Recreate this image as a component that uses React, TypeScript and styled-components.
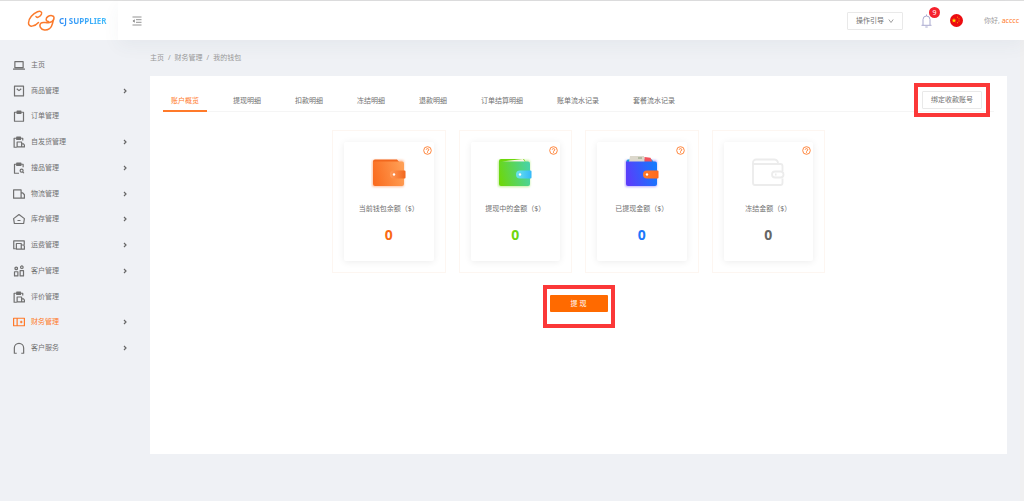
import React from "react";
import styled, { createGlobalStyle, css } from "styled-components";

const GlobalStyle = createGlobalStyle`
  * { box-sizing: border-box; }
  html { background: #eff1f5; }
  body {
    margin: 0;
    font-family: "Noto Sans", "Noto Sans CJK SC", sans-serif;
    font-size: 7px;
    line-height: 12px;
    color: #707070;
  }
  button { font: inherit; color: inherit; cursor: pointer; }
  ul, ol { list-style: none; margin: 0; padding: 0; }
  a { color: inherit; text-decoration: none; }
`;

const Page = styled.div`
  min-height: 100vh;
  display: flex;
  flex-direction: column;
  background: #eff1f5;
  border-right: 4px solid #f0f0f1;
`;

const Header = styled.header`
  position: relative;
  display: flex;
  align-items: stretch;
  height: 40px;
  margin-right: -4px;
  border-top: 1px solid #dedede;
  background: #fff;
`;

const Brand = styled.a`
  display: flex;
  align-items: center;
  gap: 4px;
  width: 118px;
  padding-left: 27px;
`;

const BrandName = styled.span`
  font: 700 8px/12px "Noto Sans", sans-serif;
  white-space: nowrap;
  background: linear-gradient(90deg, #2f8df5, #45bdfb);
  background-clip: text;
  color: transparent;
`;

const TopBar = styled.div`
  flex: 1;
  display: flex;
  align-items: center;
  padding: 0 5px 0 14px;
  box-shadow: 0 6px 18px rgba(60, 70, 100, 0.05);
`;

const IconButton = styled.button`
  position: relative;
  display: flex;
  padding: 0;
  border: 0;
  background: none;
`;

const Tools = styled.div`
  display: flex;
  align-items: center;
  margin-left: auto;
`;

const OutlineButton = styled.button`
  display: flex;
  align-items: center;
  justify-content: center;
  gap: 4px;
  height: 18px;
  padding: 0 8px;
  border: 1px solid #e9e9e9;
  border-radius: 1px;
  background: #fff;
  white-space: nowrap;
`;

const Bell = styled(IconButton)`
  margin: 0 18px;
`;

const Badge = styled.span`
  position: absolute;
  top: -7px;
  right: -8px;
  width: 11px;
  height: 11px;
  border-radius: 50%;
  background: #f5222d;
  color: #fff;
  line-height: 11px;
  text-align: center;
`;

const Greeting = styled.p`
  margin: 0 0 0 21px;
  color: #999;
`;

const UserName = styled.a`
  color: #ff7a2a;
`;

const Body = styled.div`
  flex: 1;
  display: flex;
`;

const Sidebar = styled.nav`
  width: 150px;
  padding: 12px 23px 0 13px;
`;

const Menu = styled.ul`
  display: grid;
  grid-auto-rows: 1fr;
  min-height: 309px;
`;

const MenuLink = styled.a<{ $active?: boolean }>`
  display: flex;
  align-items: center;
  gap: 6px;
  height: 100%;
  color: ${(p) => (p.$active ? "#ff7a2a" : "#707070")};
`;

const MenuArrow = styled.svg`
  margin-left: auto;
  color: #666;
`;

const Main = styled.main`
  flex: 1;
  min-width: 0;
  padding: 12px 13px 47px 0;
  display: flex;
  flex-direction: column;
`;

const Breadcrumb = styled.ol`
  display: flex;
  gap: 4px;
  margin-bottom: 12px;
  color: #999;
`;

const Panel = styled.section`
  flex: 1;
  padding: 12px 13px;
  background: #fff;
`;

const PanelHead = styled.div`
  display: flex;
  align-items: flex-end;
  height: 24px;
  border-bottom: 1px solid #f5f5f5;
`;

const Tabs = styled.div`
  display: flex;
  gap: 18px;
`;

const Tab = styled.button<{ $active?: boolean }>`
  height: 22px;
  margin-bottom: -1px;
  padding: 2px 8px 0;
  border: 0;
  border-bottom: 2px solid transparent;
  background: none;
  white-space: nowrap;
  ${(p) =>
    p.$active &&
    css`
      color: #ff7a2a;
      border-color: #ff7a2a;
    `}
`;

const Highlight = styled.div`
  border: 4px solid #fb3838;
`;

const AccountSlot = styled(Highlight)`
  align-self: center;
  margin: 0 4px 0 auto;
  padding: 4px;
`;

const Wallets = styled.ul`
  display: grid;
  grid-template-columns: repeat(4, 1fr);
  gap: 13px;
  max-width: 493px;
  margin: 18px auto 12px;
`;

const WalletFrame = styled.li`
  padding: 11px;
  border: 1px solid #fdf6f1;
`;

const WalletCard = styled.article`
  position: relative;
  display: flex;
  flex-direction: column;
  align-items: center;
  height: 119px;
  padding-top: 13px;
  border-radius: 2px;
  box-shadow: 0 1px 7px rgba(0, 0, 0, 0.08);
`;

const Help = styled(IconButton)`
  position: absolute;
  top: 4px;
  right: 2px;
`;

const WalletLabel = styled.h2`
  margin: 14px 0 11px;
  font-size: 7px;
  font-weight: 400;
  line-height: 12px;
`;

const Amount = styled.strong<{ $color: string }>`
  font-size: 14px;
  line-height: 18px;
  color: ${(p) => p.$color};
`;

const WithdrawSlot = styled(Highlight)`
  width: 72px;
  margin: 0 auto;
  padding: 6px 3px 12px;
`;

const Withdraw = styled.button`
  display: block;
  width: 100%;
  height: 17px;
  padding: 1px 0 0;
  border: 0;
  border-radius: 1px;
  background: #ff6a00;
  color: #fff;
`;

const icons: Record<string, React.ReactNode> = {
  laptop: <path d="M2.500 3.500h11v8h-11zM0 13.500h16" />,
  goods: <path d="M2 1.500h12v13H2zM5 5l3 2.500L11 5" />,
  order: <path d="M2 3h12v12H2zM5.500 1.500h5v3h-5z" />,
  ship: <path d="M13 6V3H1.500v12H5M5 1.500h5v3H5zM5.500 8H11.500v6.500H5.500zM11.500 10.500H14l1.200 1.500v2.500h-3.700" />,
  search: <path d="M13.500 7V3H2v12h6M5 1.500h5.500v3H5zM13.500 11.500a2 2 0 1 0-4 0 2 2 0 0 0 4 0M13 13l1.500 2" />,
  truck: <path d="M.8 2.500h10v11H.8zM10.800 6.500H13l2.200 2.500v4.500h-4.400" />,
  stock: <path d="M8 2l7.200 5.500-1 6.500H1.800L.8 7.500zM6 10h4" />,
  freight: <path d="M3.500 13H1V2.500h14v5M4.500 6H11v7.500H4.500zM11 8h3.500l.7 2v3.500H11" />,
  people: (
    <path d="M6 4.500a1.700 1.700 0 1 0-3.400 0 1.700 1.700 0 0 0 3.400 0M13.500 3a1.700 1.700 0 1 0-3.400 0 1.700 1.700 0 0 0 3.400 0M2 9h4.500v5.500H2zM9.500 7.500H14v7H9.500z" />
  ),
  finance: <path d="M.8 3h14.400v10H.8zM5.500 3v10M11 6.300v3.400M9.300 8h3.400" />,
  service: <path d="M5 15H1.800V8a6.200 6.200 0 0 1 12.400 0v7H11" />,
};

const menu = [
  { icon: "laptop", label: "主页" },
  { icon: "goods", label: "商品管理", more: true },
  { icon: "order", label: "订单管理" },
  { icon: "ship", label: "自发货管理", more: true },
  { icon: "search", label: "搜品管理", more: true },
  { icon: "truck", label: "物流管理", more: true },
  { icon: "stock", label: "库存管理", more: true },
  { icon: "freight", label: "运费管理", more: true },
  { icon: "people", label: "客户管理", more: true },
  { icon: "ship", label: "评价管理" },
  { icon: "finance", label: "财务管理", more: true, active: true },
  { icon: "service", label: "客户服务", more: true },
];

const tabs = [
  "账户概览",
  "提现明细",
  "扣款明细",
  "冻结明细",
  "退款明细",
  "订单结算明细",
  "账单流水记录",
  "套餐流水记录",
];

type WalletKind = "orange" | "green" | "blue" | "frozen";

const wallets: { kind: WalletKind; label: string; color: string }[] = [
  { kind: "orange", label: "当前钱包余额（$）", color: "#fa6a14" },
  { kind: "green", label: "提现中的金额（$）", color: "#6fd60c" },
  { kind: "blue", label: "已提现金额（$）", color: "#1b78fb" },
  { kind: "frozen", label: "冻结金额（$）", color: "#666" },
];

const fills = {
  orange: { body: ["#fa6d20", "#ff9f55"], clasp: ["#ff9a58", "#f2671d"] },
  green: { body: ["#6dd70c", "#48d3a5"], clasp: ["#6be3ea", "#35b8fb"] },
  blue: { body: ["#5b3cfb", "#147afd"], clasp: ["#ff7a2a", "#ff6a1c"] },
};

function WalletArt({ kind }: { kind: WalletKind }) {
  if (kind === "frozen") {
    return (
      <svg width="36" height="34" viewBox="0 0 36 34" fill="none" stroke="#ececec" strokeWidth="1.800" aria-hidden="true">
        <path d="M32.500 16v-5a2 2 0 0 0-2-2H3V28a2 2 0 0 0 2 2h25.500a2 2 0 0 0 2-2v-4.500" />
        <path d="M3 9.500V7.500a3 3 0 0 1 3-3h18.500a4 4 0 0 1 3.500 4" />
        <rect x="22" y="16.500" width="11.500" height="6" rx="3" />
        <path d="M25 19.500h1.500" />
      </svg>
    );
  }
  const { body, clasp } = fills[kind];
  return (
    <svg width="36" height="34" viewBox="0 0 36 34" aria-hidden="true">
      <defs>
        <linearGradient id={`${kind}-body`} x1="0" y1="0.600" x2="1" y2="0.400">
          <stop stopColor={body[0]} />
          <stop offset="1" stopColor={body[1]} />
        </linearGradient>
        <linearGradient id={`${kind}-clasp`}>
          <stop stopColor={clasp[0]} />
          <stop offset="1" stopColor={clasp[1]} />
        </linearGradient>
        <filter id={`${kind}-glow`} x="-20%" y="-20%" width="140%" height="140%">
          <feGaussianBlur stdDeviation="1" />
        </filter>
      </defs>
      <rect x="1" y="5" width="32" height="27" rx="2" fill={body[0]} opacity="0.400" filter={`url(#${kind}-glow)`} />
      {kind === "orange" && <path d="M2 9V6.500a2 2 0 0 1 2-2H26l3 3.500z" fill="#f2671d" />}
      {kind === "green" && (
        <>
          <path d="M2 9V6a2 2 0 0 1 2-2H27l2 4z" fill="#6dd70c" />
          <path d="M5 6.500l21-2.500 2 3z" fill="#fff4ec" />
        </>
      )}
      {kind === "blue" && (
        <>
          <path d="M2.500 8V6a1.500 1.500 0 0 1 1.500-1.500H28L30 8z" fill="#1aa0d8" />
          <path d="M6 1h14l1 6H5z" fill="#dcd8cc" />
          <path d="M14 3h4" stroke="#8ba07c" />
          <path d="M20.500 2l6 .8 2 4.200h-8z" fill="#f2525c" />
        </>
      )}
      <path d="M2 6.500H31a2 2 0 0 1 2 2V29a2 2 0 0 1-2 2H4a2 2 0 0 1-2-2z" fill={`url(#${kind}-body)`} />
      <path d="M23 15.500h10.500a1 1 0 0 1 1 1v6a1 1 0 0 1-1 1H23a4 4 0 0 1 0-8z" fill={`url(#${kind}-clasp)`} />
      <circle cx="23" cy="19.500" r="1.200" fill="#fff" />
    </svg>
  );
}

export default function App() {
  return (
    <>
      <GlobalStyle />
      <Page>
        <Header>
          <Brand href="#" aria-label="CJ Supplier">
            <svg width="28" height="22" viewBox="0 0 28 22" fill="none" stroke="#fb7a2c" strokeWidth="1.500" strokeLinecap="round" aria-hidden="true">
              <path d="M9 6.500C10 8.500 13.500 6.500 14.500 4 15.300 1.500 13 .8 10.500 1.800 6 3.500 1.500 8.500 1.500 13c0 4.500 6 4 10-.5" />
              <path d="M21.500 11.500C18.500 11.500 18.500 8 21 6.500 23.500 5 27 5.500 27 7.500 27 9 26 11 25.500 13.500 24.500 18 21 20.300 17.500 20 13.500 19.500 11.800 15.500 13.800 13.300 15.500 11.500 18.500 13 21.500 12.700 24 12.500 26 11 27 9" />
            </svg>
            <BrandName>CJ SUPPLIER</BrandName>
          </Brand>
          <TopBar>
            <IconButton aria-label="收起菜单">
              <svg width="10" height="10" viewBox="0 0 10 10" fill="none" stroke="#888" strokeWidth="0.900" aria-hidden="true">
                <path d="M.5 1h9M4 3.700h5.500M4 6.300h5.500M.5 9h9" />
                <path d="M2.700 3.300v3.400L.6 5z" fill="#777" stroke="none" />
              </svg>
            </IconButton>
            <Tools>
              <OutlineButton>
                操作引导
                <svg width="6" height="6" viewBox="0 0 6 6" fill="none" stroke="#888" strokeWidth="0.800" aria-hidden="true">
                  <path d="M.8 1.500L3 4.500l2.200-3" />
                </svg>
              </OutlineButton>
              <Bell aria-label="通知">
                <svg width="11" height="14" viewBox="0 0 11 14" fill="none" stroke="#a9a9cf" strokeWidth="1" aria-hidden="true">
                  <path d="M2 11V5.500a3.500 3.500 0 0 1 7 0V11M.5 11.300h10M4.300 13h2.400M5.500 2V.5" />
                </svg>
                <Badge>9</Badge>
              </Bell>
              <IconButton aria-label="中文">
                <svg width="13" height="13" viewBox="0 0 13 13" aria-hidden="true">
                  <circle cx="6.500" cy="6.500" r="6.500" fill="#ec0c10" />
                  <path d="M4 4l.6 1.700h1.800L5 6.800l.5 1.700L4 7.500 2.500 8.500 3 6.800 1.600 5.700h1.800z" fill="#ffde00" />
                  <path d="M7 3.200h1M8.500 4.800h1M8.500 7h1M7 8.700h1" stroke="#ffb000" strokeWidth="0.900" />
                </svg>
              </IconButton>
              <Greeting>
                你好, <UserName href="#">acccc</UserName>
              </Greeting>
            </Tools>
          </TopBar>
        </Header>
        <Body>
          <Sidebar>
            <Menu>
              {menu.map((item) => (
                <li key={item.label}>
                  <MenuLink href="#" $active={item.active}>
                    <svg width="12" height="12" viewBox="0 0 16 16" fill="none" stroke="currentColor" strokeWidth="1.600" strokeLinejoin="round" aria-hidden="true">
                      {icons[item.icon]}
                    </svg>
                    {item.label}
                    {item.more && (
                      <MenuArrow width="4" height="6" viewBox="0 0 4 6" fill="none" stroke="currentColor" strokeWidth="1.200" aria-hidden="true">
                        <path d="M1 1l2 2-2 2" />
                      </MenuArrow>
                    )}
                  </MenuLink>
                </li>
              ))}
            </Menu>
          </Sidebar>
          <Main>
            <Breadcrumb>
              <li><a href="#">主页</a></li>
              <li>/</li>
              <li><a href="#">财务管理</a></li>
              <li>/</li>
              <li>我的钱包</li>
            </Breadcrumb>
            <Panel>
              <PanelHead>
                <Tabs role="tablist">
                  {tabs.map((name, i) => (
                    <Tab key={name} role="tab" aria-selected={i === 0} $active={i === 0}>
                      {name}
                    </Tab>
                  ))}
                </Tabs>
                <AccountSlot>
                  <OutlineButton>绑定收款账号</OutlineButton>
                </AccountSlot>
              </PanelHead>
              <Wallets>
                {wallets.map((w) => (
                  <WalletFrame key={w.kind}>
                    <WalletCard>
                      <Help aria-label="说明">
                        <svg width="9" height="9" viewBox="0 0 9 9" fill="none" stroke="#ff7a2a" strokeWidth="0.900" aria-hidden="true">
                          <circle cx="4.500" cy="4.500" r="3.800" />
                          <path d="M3.200 3.700a1.300 1.200 0 1 1 1.300 1.300v.6M4.500 6.200v.8" />
                        </svg>
                      </Help>
                      <WalletArt kind={w.kind} />
                      <WalletLabel>{w.label}</WalletLabel>
                      <Amount $color={w.color}>0</Amount>
                    </WalletCard>
                  </WalletFrame>
                ))}
              </Wallets>
              <WithdrawSlot>
                <Withdraw>提 现</Withdraw>
              </WithdrawSlot>
            </Panel>
          </Main>
        </Body>
      </Page>
    </>
  );
}
